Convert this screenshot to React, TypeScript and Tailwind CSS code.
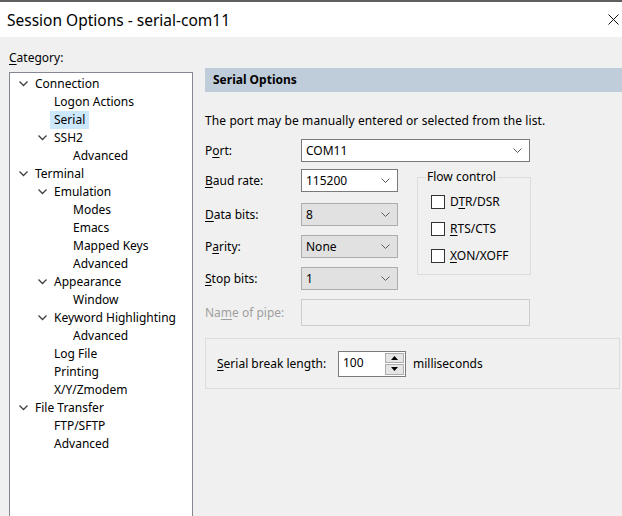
import React from 'react';

interface TreeItem {
  label: string;
  level: number;
  open?: boolean;
  selected?: boolean;
}

const tree: TreeItem[] = [
  { label: 'Connection', level: 0, open: true },
  { label: 'Logon Actions', level: 1 },
  { label: 'Serial', level: 1, selected: true },
  { label: 'SSH2', level: 1, open: true },
  { label: 'Advanced', level: 2 },
  { label: 'Terminal', level: 0, open: true },
  { label: 'Emulation', level: 1, open: true },
  { label: 'Modes', level: 2 },
  { label: 'Emacs', level: 2 },
  { label: 'Mapped Keys', level: 2 },
  { label: 'Advanced', level: 2 },
  { label: 'Appearance', level: 1, open: true },
  { label: 'Window', level: 2 },
  { label: 'Keyword Highlighting', level: 1, open: true },
  { label: 'Advanced', level: 2 },
  { label: 'Log File', level: 1 },
  { label: 'Printing', level: 1 },
  { label: 'X/Y/Zmodem', level: 1 },
  { label: 'File Transfer', level: 0, open: true },
  { label: 'FTP/SFTP', level: 1 },
  { label: 'Advanced', level: 1 },
];

const indent = ['pl-[8px]', 'pl-[27px]', 'pl-[46px]'];

function Chevron() {
  return (
    <svg width="9" height="6" viewBox="0 0 9 6" className="block">
      <path d="M0.5 0.5 L4.5 4.5 L8.5 0.5" fill="none" stroke="#404040" strokeWidth="1.3" />
    </svg>
  );
}

function ComboArrow() {
  return (
    <svg width="9" height="5" viewBox="0 0 9 5" className="block">
      <path d="M0.5 0.5 L4.5 4.5 L8.5 0.5" fill="none" stroke="#5a5a5a" strokeWidth="1" />
    </svg>
  );
}

function Combo({ value, width, active }: { value: string; width: string; active?: boolean }) {
  return (
    <div
      className={`${width} h-[23px] flex items-center justify-between pl-[4px] pr-[7px] border ${
        active ? 'bg-white border-[#7a7a7a]' : 'bg-[#e1e1e1] border-[#adadad]'
      }`}
    >
      <span>{value}</span>
      <ComboArrow />
    </div>
  );
}

function Field({ children }: { children: React.ReactNode }) {
  return <span className="w-[96px] shrink-0">{children}</span>;
}

function Check({ children }: { children: React.ReactNode }) {
  return (
    <div className="flex items-center h-[16px]">
      <span className="w-[14px] h-[14px] border border-[#333333] bg-white shrink-0" />
      <span className="ml-[5px]">{children}</span>
    </div>
  );
}

export default function App() {
  return (
    <div
      className="w-[622px] h-[516px] overflow-hidden flex flex-col text-[12px] leading-[16px] text-black"
      style={{ fontFamily: '"Noto Sans", "Liberation Sans", sans-serif' }}
    >
      {/* Title bar */}
      <div className="h-[2px] bg-[#5f5f5f]" />
      <div className="h-[35px] bg-white flex items-center justify-between pl-[7px] pr-[2px]">
        <span className="text-[15.5px] leading-[20px]">Session Options - serial-com11</span>
        <svg width="11" height="11" viewBox="0 0 11 11" className="block mr-[1px]">
          <path d="M0.5 0.5 L10.5 10.5 M10.5 0.5 L0.5 10.5" stroke="#111" strokeWidth="1" />
        </svg>
      </div>

      {/* Body */}
      <div className="flex-1 bg-[#f0f0f0] flex pt-[13px] pl-[9px]">
        {/* Category tree */}
        <div className="w-[184px] shrink-0 flex flex-col">
          <div>
            <u className="underline-offset-2">C</u>ategory:
          </div>
          <div className="mt-[6px] flex-1 bg-white border border-[#828790] border-b-0 pt-[2px]">
            {tree.map((t, i) => (
              <div key={i} className={`h-[18px] flex items-center ${indent[t.level]}`}>
                <span className="w-[17px] shrink-0 flex items-center pl-[1px]">
                  {t.open && <Chevron />}
                </span>
                {t.selected ? (
                  <span className="h-[18px] flex items-center bg-[#cce8ff] px-[4px] -ml-[4px]">{t.label}</span>
                ) : (
                  <span className="whitespace-nowrap">{t.label}</span>
                )}
              </div>
            ))}
          </div>
        </div>

        {/* Serial options */}
        <div className="ml-[12px] mt-[18px] flex-1 flex flex-col">
          <div className="h-[24px] bg-[#bfcddb] flex items-center pl-[8px] font-bold">Serial Options</div>

          <div className="mt-[21px] tracking-[0.1px]">The port may be manually entered or selected from the list.</div>

          <div className="mt-[10px] flex items-center">
            <Field>
              P<u className="underline-offset-2">o</u>rt:
            </Field>
            <Combo value="COM11" width="w-[229px]" active />
          </div>

          <div className="mt-[7px] flex">
            <div className="flex flex-col">
              <div className="flex items-center">
                <Field>
                  <u className="underline-offset-2">B</u>aud rate:
                </Field>
                <Combo value="115200" width="w-[97px]" active />
              </div>
              <div className="mt-[11px] flex items-center">
                <Field>
                  <u className="underline-offset-2">D</u>ata bits:
                </Field>
                <Combo value="8" width="w-[97px]" />
              </div>
              <div className="mt-[9px] flex items-center">
                <Field>
                  P<u className="underline-offset-2">a</u>rity:
                </Field>
                <Combo value="None" width="w-[97px]" />
              </div>
              <div className="mt-[9px] flex items-center">
                <Field>
                  <u className="underline-offset-2">S</u>top bits:
                </Field>
                <Combo value="1" width="w-[97px]" />
              </div>
            </div>

            {/* Flow control group */}
            <div className="relative ml-[19px] mt-[8px] w-[114px] h-[98px] border border-[#dcdcdc] pl-[13px] pt-[16px] flex flex-col gap-[11px]">
              <span className="absolute left-[8px] -top-[9px] px-[1px] bg-[#f0f0f0]">Flow control</span>
              <Check>
                D<u className="underline-offset-2">T</u>R/DSR
              </Check>
              <Check>
                <u className="underline-offset-2">R</u>TS/CTS
              </Check>
              <Check>
                <u className="underline-offset-2">X</u>ON/XOFF
              </Check>
            </div>
          </div>

          <div className="mt-[9px] flex items-center text-[#a0a0a0]">
            <Field>
              Na<u className="underline-offset-2">m</u>e of pipe:
            </Field>
            <div className="w-[229px] h-[27px] border border-[#cccccc] bg-[#f0f0f0]" />
          </div>

          <div className="mt-[12px] w-[415px] h-[51px] border border-[#dcdcdc] flex items-center pl-[11px]">
            <span className="w-[121px] shrink-0">
              <u className="underline-offset-2">S</u>erial break length:
            </span>
            <div className="w-[68px] h-[26px] border border-[#7a7a7a] bg-white flex">
              <span className="flex-1 pl-[4px] pt-[3px]">100</span>
              <div className="w-[20px] flex flex-col gap-[1px] py-[1px] pr-[1px]">
                <div className="flex-1 bg-[#e5e5e5] border border-[#adadad] flex items-center justify-center">
                  <svg width="7" height="4" viewBox="0 0 7 4" className="block">
                    <path d="M0 4 L3.5 0 L7 4 Z" fill="#000" />
                  </svg>
                </div>
                <div className="flex-1 bg-[#e5e5e5] border border-[#adadad] flex items-center justify-center">
                  <svg width="7" height="4" viewBox="0 0 7 4" className="block">
                    <path d="M0 0 L3.5 4 L7 0 Z" fill="#000" />
                  </svg>
                </div>
              </div>
            </div>
            <span className="ml-[7px]">milliseconds</span>
          </div>
        </div>
      </div>
    </div>
  );
}
